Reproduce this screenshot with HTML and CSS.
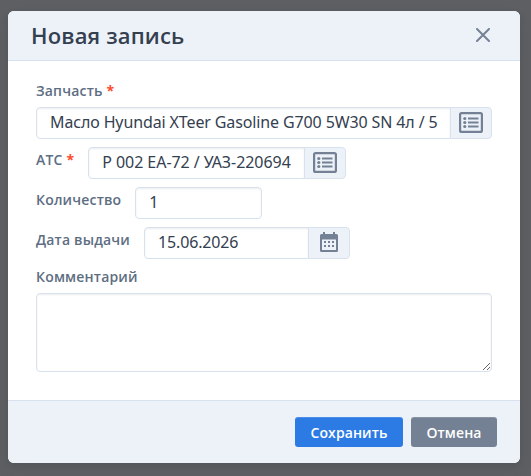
FILE: index.html
```html
<!DOCTYPE html>
<html lang="ru">
<head>
<meta charset="utf-8">
<title>Новая запись</title>
<link rel="stylesheet" href="styles.css">
</head>
<body>
<svg class="sprite" aria-hidden="true">
  <symbol id="list" viewBox="0 0 24 21">
    <rect x="1.100" y="1.100" width="21.800" height="18.800" rx="1.500" fill="none" stroke="currentColor" stroke-width="2.200"/>
    <path d="M9 6.500h10.500M9 10.500h10.500M9 14.500h10.500" stroke="currentColor" stroke-width="2"/>
    <circle cx="5.800" cy="6.500" r="1.600"/><circle cx="5.800" cy="10.500" r="1.600"/><circle cx="5.800" cy="14.500" r="1.600"/>
  </symbol>
</svg>
<form class="modal">
  <header class="modal-header">
    <h1 class="title">Новая запись</h1>
    <button class="close" type="button" aria-label="Закрыть"><svg width="14" height="14" viewBox="0 0 14 14"><path d="M1 1l12 12M13 1L1 13" stroke="currentColor" stroke-width="2" stroke-linecap="round"/></svg></button>
  </header>
  <div class="modal-body">
    <label class="label label-top" for="part">Запчасть <span class="required">*</span></label>
    <div class="group group-part">
      <input class="control" id="part" type="text" value="Масло Hyundai XTeer Gasoline G700 5W30 SN 4л / 5">
      <button class="addon" type="button" aria-label="Выбрать"><svg class="icon-list"><use href="#list"/></svg></button>
    </div>
    <div class="row">
      <label class="label" for="vehicle">АТС <span class="required">*</span></label>
      <div class="group group-vehicle">
        <input class="control" id="vehicle" type="text" value="Р 002 ЕА-72 / УАЗ-220694">
        <button class="addon" type="button" aria-label="Выбрать"><svg class="icon-list"><use href="#list"/></svg></button>
      </div>
    </div>
    <div class="row">
      <label class="label" for="count">Количество</label>
      <div class="group group-count"><input class="control" id="count" type="text" value="1"></div>
    </div>
    <div class="row">
      <label class="label" for="date">Дата выдачи</label>
      <div class="group group-date">
        <input class="control" id="date" type="text" value="15.06.2026">
        <button class="addon" type="button" aria-label="Календарь"><svg class="icon-calendar" viewBox="0 0 18 20"><path fill-rule="evenodd" d="M3 0h2v2h8V0h2v2h1.500Q18 2 18 3.500V18.500Q18 20 16.500 20h-15Q0 20 0 18.500v-15Q0 2 1.500 2H3zM2 7.500v10.500h14V7.500z"/><path d="M4 9h2v2H4zm4 0h2v2H8zm4 0h2v2h-2zM4 13h2v2H4zm4 0h2v2H8zm4 0h2v2h-2z"/></svg></button>
      </div>
    </div>
    <label class="label label-comment" for="comment">Комментарий</label>
    <textarea class="comment" id="comment"></textarea>
  </div>
  <footer class="modal-footer">
    <button class="button save" type="button">Сохранить</button>
    <button class="button cancel" type="button">Отмена</button>
  </footer>
</form>
</body>
</html>
```
FILE: styles.css
```css
* { box-sizing: border-box; }
body {
  margin: 0;
  padding: 11px 11px 13px 8px;
  height: 476px;
  overflow: hidden;
  background: #5e5f62;
  font-family: "Noto Sans", sans-serif;
  color: #344050;
}
button, input, textarea { font-family: inherit; }
svg { display: block; fill: currentColor; }
.sprite { display: none; }
.modal {
  display: flex;
  flex-direction: column;
  height: 452px;
  border-radius: 6px;
  overflow: hidden;
  background: #fff;
  box-shadow: 0 7px 14px rgba(65, 69, 88, .1), 0 3px 6px rgba(0, 0, 0, .07);
}
.modal-header {
  display: flex;
  align-items: center;
  justify-content: space-between;
  height: 50px;
  padding: 0 30px 1px 23px;
  background: #edf2f9;
  border-bottom: 1px solid #d8e2ef;
}
.title {
  margin: 0;
  font: 570 22px/28px "Open Sans", sans-serif;
  letter-spacing: .15px;
}
.close {
  padding: 0;
  border: 0;
  background: none;
  color: #748194;
}
.modal-body {
  flex: 1;
  padding: 20px 28px 0;
}
.label {
  display: block;
  font: 600 14px/20px "Open Sans", sans-serif;
  letter-spacing: .18px;
  color: #5e6e82;
  white-space: nowrap;
}
.label-top { margin-bottom: 6px; }
.required { color: #fd4a2c; font-weight: 700; }
.group {
  display: flex;
  height: 32px;
}
.row {
  display: flex;
  gap: 14px;
  margin-top: 8px;
}
.row .label { padding-top: 3px; }
.group-part { width: 456px; }
.group-vehicle { width: 258px; }
.group-count { width: 127px; }
.group-date { width: 206px; }
.control {
  flex: 1;
  min-width: 0;
  padding: 0 12px 2px 13px;
  border: 1px solid #d8e2ef;
  border-radius: 4px;
  background: #fff;
  box-shadow: inset 0 1px 2px rgba(0, 0, 0, .075);
  color: #344050;
  font-size: 16px;
  letter-spacing: -.05px;
}
.group-part .control { letter-spacing: -.12px; }
.group-date .control { letter-spacing: -.15px; }
.control:not(:last-child) { border-radius: 4px 0 0 4px; }
.addon {
  display: flex;
  align-items: center;
  justify-content: center;
  width: 42px;
  margin-left: -1px;
  padding: 0 0 1px;
  border: 1px solid #d8e2ef;
  border-radius: 0 4px 4px 0;
  background: #edf2f9;
  color: #748194;
}
.icon-list { width: 24px; height: 21px; }
.icon-calendar { width: 18px; height: 20px; margin-bottom: 1px; }
.label-comment { margin-top: 8px; }
.comment {
  display: block;
  width: 456px;
  height: 79px;
  margin-top: 6px;
  border: 1px solid #d8e2ef;
  border-radius: 4px;
  box-shadow: inset 0 1px 2px rgba(0, 0, 0, .075);
  resize: vertical;
}
.modal-footer {
  display: flex;
  justify-content: flex-end;
  gap: 8px;
  height: 63px;
  padding: 16px 23px 0;
  background: #edf2f9;
  border-top: 1px solid #d8e2ef;
}
.button {
  height: 30px;
  padding: 2px 0 0;
  border: 0;
  border-radius: 3px;
  box-shadow: inset 0 1px 0 rgba(255, 255, 255, .15);
  color: #fff;
  font: 600 14px/20px "Open Sans", sans-serif;
  letter-spacing: .1px;
}
.save { width: 108px; background: #2c7be5; }
.cancel { width: 86px; background: #748194; }
```
